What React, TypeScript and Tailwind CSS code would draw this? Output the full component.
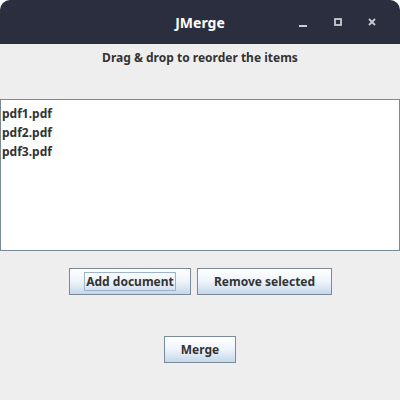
import React, { useState } from 'react';

const files = ['pdf1.pdf', 'pdf2.pdf', 'pdf3.pdf'];

const btn =
  'h-[27px] border border-[#7a8a99] bg-gradient-to-b from-[#ffffff] via-[#eef4fb] to-[#c6d7e8] text-[12px] font-bold text-[#333333] flex items-center justify-center whitespace-nowrap';

export default function App() {
  const [items] = useState(files);

  return (
    <div className="w-[400px] h-[400px] bg-[#eeeeee] flex flex-col rounded-t-[10px] overflow-hidden" style={{ fontFamily: '"Noto Sans", "Open Sans", sans-serif' }}>
      {/* Title bar */}
      <div className="h-[44px] bg-[#2b2e3e] flex items-center relative">
        <div className="flex-1 text-center text-[14px] font-bold text-white">JMerge</div>
        <div className="absolute right-0 top-0 h-full flex items-center">
          <svg className="w-[12px] h-[12px] mr-[23px]" viewBox="0 0 12 12">
            <rect x="2" y="9" width="8" height="2" fill="#c8ccd4" />
          </svg>
          <svg className="w-[12px] h-[12px] mr-[22px]" viewBox="0 0 12 12">
            <rect x="3" y="3" width="6" height="6" fill="none" stroke="#c8ccd4" strokeWidth="1.8" />
          </svg>
          <svg className="w-[12px] h-[12px] mr-[22px]" viewBox="0 0 12 12">
            <path d="M3 3l6 6M9 3l-6 6" stroke="#c8ccd4" strokeWidth="1.8" />
          </svg>
        </div>
      </div>

      {/* Label */}
      <div className="h-[28px] flex items-center justify-center text-[12px] font-bold text-[#333333]">
        Drag &amp; drop to reorder the items
      </div>

      {/* List */}
      <div className="mt-[27px] h-[152px] bg-white border border-[#7a8a99] flex flex-col pt-[4px] pl-[1px]">
        {items.map((f) => (
          <div key={f} className="h-[19px] leading-[19px] text-[12px] font-bold text-[#333333]">
            {f}
          </div>
        ))}
      </div>

      {/* Buttons */}
      <div className="mt-[17px] flex justify-center gap-[6px] pl-[1px]">
        <button className={`${btn} w-[122px]`}>
          <span className="border border-[#9fb3c8] px-[1px] h-[19px] leading-[17px]">Add document</span>
        </button>
        <button className={`${btn} w-[135px]`}>Remove selected</button>
      </div>

      <div className="mt-[41px] flex justify-center">
        <button className={`${btn} w-[72px]`}>Merge</button>
      </div>
    </div>
  );
}
